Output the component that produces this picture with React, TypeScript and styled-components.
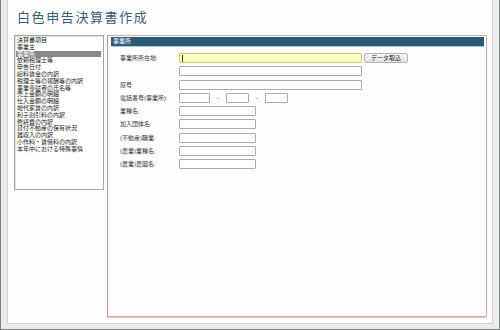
import styled, { createGlobalStyle } from "styled-components";

const GlobalStyle = createGlobalStyle`
  html, body {
    margin: 0;
    padding: 0;
    background: #ffffff;
  }

  body {
    font-family: "Liberation Sans", "Noto Sans CJK JP", sans-serif;
  }
`;

const Frame = styled.div`
  width: 500px;
  height: 330px;
  box-sizing: border-box;
  background: #ececec;
  border: 1px solid #7b8383;
  border-top: none;
  padding: 0 6px 5px 6px;
`;

const Panel = styled.div`
  height: 100%;
  box-sizing: border-box;
  background: #fefefe;
  border: 1px solid #d2d2d2;
  border-top: none;
  padding: 0 4px 0 6px;
  display: flex;
  flex-direction: column;
`;

const Title = styled.h1`
  margin: 0;
  height: 35px;
  box-sizing: border-box;
  padding: 9px 0 0 3px;
  font-family: "Noto Sans CJK JP", sans-serif;
  font-size: 13px;
  line-height: 16px;
  font-weight: 400;
  letter-spacing: 1.6px;
  color: #3a5d76;
`;

const Main = styled.div`
  display: flex;
  align-items: flex-start;
  gap: 3px;
`;

const ItemList = styled.ul`
  margin: 0;
  width: 90px;
  height: 155px;
  box-sizing: border-box;
  border: 1px solid #a4a4a4;
  box-shadow: inset 1px 1px 0 #e4e4e4;
  background: #ffffff;
  list-style: none;
  padding: 1px 2px 0 1px;
`;

const Item = styled.li<{ $selected?: boolean }>`
  height: 6.8px;
  font-size: 6px;
  line-height: 6.8px;
  padding-left: 1px;
  white-space: nowrap;
  overflow: hidden;
  color: ${(p) => (p.$selected ? "#ffffff" : "#222222")};
  background: ${(p) => (p.$selected ? "#8a8a8a" : "transparent")};
`;

const Section = styled.section`
  width: 380px;
  height: 282px;
  box-sizing: border-box;
  border: 1px solid #d9a9a6;
  border-left-color: #d38e8a;
  box-shadow: 0 1px 0 #e2bebb;
  padding: 1px 2px 0 3px;
`;

const SectionHeader = styled.div`
  height: 10px;
  box-sizing: border-box;
  background: #2b5a79;
  border-bottom: 1px solid #a9c7d6;
  color: #ffffff;
  font-size: 6px;
  line-height: 9px;
  padding-left: 2px;
`;

const Form = styled.div`
  display: flex;
  flex-direction: column;
  gap: 3.3px;
  padding: 6px 0 0 9px;
`;

const Row = styled.div`
  display: flex;
  align-items: center;
  height: 10px;
`;

const Label = styled.span`
  width: 59px;
  flex: none;
  font-size: 6px;
  line-height: 10px;
  color: #333333;
  white-space: nowrap;
`;

const Field = styled.div<{ $width: number }>`
  width: ${(p) => p.$width}px;
  height: 10px;
  box-sizing: border-box;
  flex: none;
  border: 1px solid #aaaaaa;
  border-radius: 1px;
  background: #ffffff;
`;

const ActiveField = styled(Field)`
  background: #ffffbe;
  border-color: #d6c86a;
  display: flex;
  align-items: center;
  padding-left: 2px;
`;

const Caret = styled.span`
  width: 1px;
  height: 7px;
  background: #333333;
`;

const Button = styled.button`
  margin-left: 2px;
  width: 44px;
  height: 10px;
  box-sizing: border-box;
  padding: 0;
  border: 1px solid #b4b4b4;
  border-radius: 2px;
  background: linear-gradient(#f6f6f6, #e2e2e2);
  font-family: inherit;
  font-size: 6px;
  line-height: 8px;
  color: #222222;
`;

const Dash = styled.span<{ $gap: number }>`
  width: ${(p) => p.$gap}px;
  flex: none;
  text-align: center;
  font-size: 6px;
  line-height: 10px;
  color: #333333;
`;

const items = [
  "決算書項目",
  "事業主",
  "事業所",
  "依頼税理士等",
  "申告日付",
  "給料賃金の内訳",
  "税理士等の報酬等の内訳",
  "事業専従者の氏名等",
  "売上金額の明細",
  "仕入金額の明細",
  "地代家賃の内訳",
  "利子割引料の内訳",
  "修繕費の内訳",
  "貸付不動産の保有状況",
  "雑収入の内訳",
  "小作料・賃借料の内訳",
  "本年中における特殊事情",
];

const shortFields = [
  "業種名:",
  "加入団体名:",
  "(不動産)職業:",
  "(農業)業種名:",
  "(農業)農園名:",
];

export default function App() {
  return (
    <>
      <GlobalStyle />
      <Frame>
        <Panel>
          <Title>白色申告決算書作成</Title>
          <Main>
            <ItemList>
              {items.map((item) => (
                <Item key={item} $selected={item === "事業所"}>
                  {item}
                </Item>
              ))}
            </ItemList>
            <Section>
              <SectionHeader>事業所</SectionHeader>
              <Form>
                <Row>
                  <Label>事業所所在地:</Label>
                  <ActiveField $width={183}>
                    <Caret />
                  </ActiveField>
                  <Button>データ取込</Button>
                </Row>
                <Row>
                  <Label />
                  <Field $width={183} />
                </Row>
                <Row>
                  <Label>屋号:</Label>
                  <Field $width={183} />
                </Row>
                <Row>
                  <Label>電話番号(事業所):</Label>
                  <Field $width={31} />
                  <Dash $gap={16}>-</Dash>
                  <Field $width={23} />
                  <Dash $gap={16}>-</Dash>
                  <Field $width={23} />
                </Row>
                {shortFields.map((label) => (
                  <Row key={label}>
                    <Label>{label}</Label>
                    <Field $width={77} />
                  </Row>
                ))}
              </Form>
            </Section>
          </Main>
        </Panel>
      </Frame>
    </>
  );
}
